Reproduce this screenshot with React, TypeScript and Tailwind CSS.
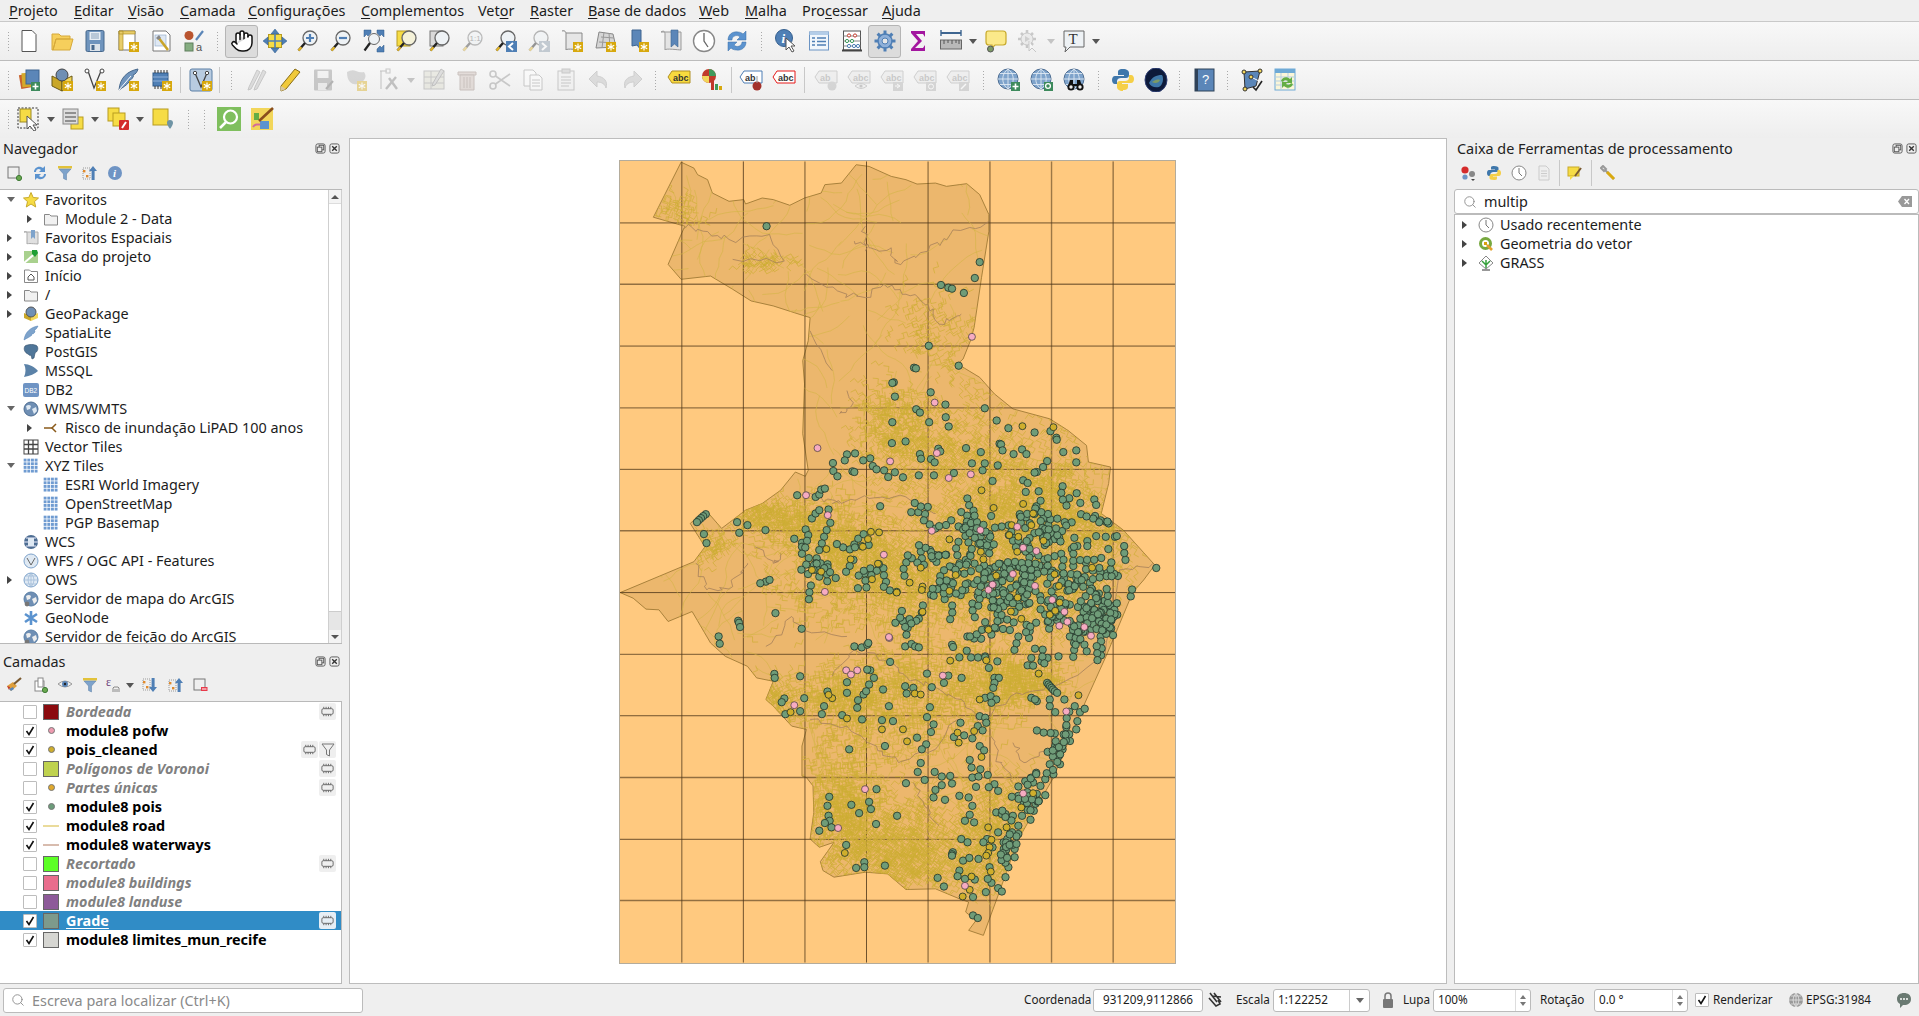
import type { ReactNode } from 'react';
import { Hand, Search } from 'lucide-react';

// ---------- map data (traced coordinates) ----------
const OUTLINE = [190,32,225,50,235,70,262,85,275,125,320,150,360,145,365,158,410,140,440,145,485,162,525,140,570,125,580,100,625,95,665,40,700,45,760,75,800,85,830,98,880,95,910,105,965,97,1000,130,1025,190,1025,240,1005,380,985,530,975,570,955,625,940,640,1000,680,1040,730,1090,775,1190,805,1240,840,1290,885,1295,935,1355,950,1350,1000,1330,1090,1390,1140,1475,1245,1445,1290,1415,1328,1345,1514,1270,1699,1200,1885,1105,2071,1045,2255,1010,2360,970,2345,990,2315,962,2290,970,2260,945,2250,880,2220,800,2222,750,2175,690,2170,605,2185,575,2165,568,2138,605,2080,565,2095,540,2070,550,1990,548,1910,530,1885,518,1880,518,1790,530,1740,490,1730,440,1670,420,1650,440,1595,395,1585,370,1550,310,1520,270,1480,220,1385,155,1415,130,1380,95,1378,60,1345,25,1328,225,1235,255,1190,215,1120,240,1095,265,1090,300,1135,365,1080,410,1060,460,1020,500,965,527,978,535,960,520,850,525,700,520,630,535,570,540,500,510,490,440,465,380,450,330,415,270,375,190,385,155,340,200,225,115,198];
const GREEN = [422,225,1000,333,987,381,895,402,915,410,925,413,957,426,862,585,943,645,822,651,827,653,767,695,763,697,770,738,867,725,907,762,1014,773,828,776,838,786,908,800,763,815,863,815,916,828,1046,810,1078,833,1149,846,1192,842,1208,862,1209,868,762,878,799,873,1054,880,1058,882,1062,900,963,893,1003,905,1092,911,1115,897,1127,911,888,895,893,903,838,911,841,925,640,912,662,909,634,930,602,938,684,930,703,924,710,947,720,957,741,960,770,966,792,981,752,980,603,962,614,978,655,963,660,965,835,975,876,975,868,926,878,936,979,939,1014,939,1008,960,930,968,1049,945,1227,905,1262,900,1262,936,1183,932,1172,950,1155,965,1149,967,1035,992,1118,990,1130,998,1225,1008,1160,1023,1125,1025,1263,1029,1243,1044,1311,1048,1316,1064,1273,1058,1275,1092,1343,1115,1350,1120,1342,1160,1367,1160,1372,1158,1316,1158,1292,1173,1292,1188,1265,1188,1250,1197,1257,1163,1349,1197,1330,1224,1479,1254,1288,1237,1254,1248,1375,1278,1262,1284,505,1035,555,1040,565,1033,570,1018,580,1015,730,1068,257,1092,250,1098,244,1104,238,1110,233,1116,342,1116,370,1125,348,1148,419,1140,252,1152,259,1179,497,1166,518,1178,518,1190,528,1138,535,1155,545,1105,555,1090,565,1080,590,1078,595,1118,585,1140,578,1160,572,1180,565,1200,558,1225,555,1240,560,1260,565,1280,
420,1295,405,1300,430,1290,345,1413,347,1419,350,1432,292,1460,295,1482,446,1390,517,1437,660,1490,680,1493,695,1485,698,1480,798,1490,815,1483,825,1490,835,1493,757,1537,925,1485,928,1492,945,1523,965,1503,1015,1520,1048,1535,1025,1555,1040,1585,1052,1585,1040,1600,1037,1615,1015,1645,1030,1640,1045,1650,1032,1660,857,1572,915,1578,903,1600,951,1585,870,1613,798,1610,820,1615,802,1632,738,1620,754,1670,865,1673,857,1703,875,1725,868,1748,830,1765,855,1785,843,1800,743,1790,735,1712,765,1715,646,1800,681,1710,627,1697,668,1675,670,1652,685,1635,692,1625,700,1605,713,1585,703,1562,695,1560,640,1598,640,1630,587,1626,578,1670,572,1694,524,1646,513,1685,513,1580,443,1573,444,1585,470,1647,463,1658,473,1694,948,1720,1000,1700,1015,1705,1018,1720,995,1730,1008,1743,980,1767,958,1758,930,1763,1000,1790,1012,1803,973,1832,978,1855,1002,1860,980,1885,997,1882,1022,1877,1040,1905,1025,1914,1050,1925,990,1913,920,1880,897,1882,878,1868,897,1908,925,1903,880,1922,875,1945,906,1952,945,1940,970,1945,980,1970,973,1997,960,2015,985,2020,950,2070,967,2080,927,2110,925,2116,925,2120,955,2135,972,2127,997,2130,945,2165,940,2182,960,2190,987,2192,1017,2230,1050,2218,1060,2228,982,2245,1032,2202,1022,2190,886,2187,903,2213,1027,2155,800,1902,832,1868,851,1892,840,1841,720,1920,700,1958,705,1980,652,1967,673,1992,776,2000,719,2025,592,1943,587,1970,590,2000,593,2015,580,2022,598,2035,565,2045,638,2088,665,2157,687,2140,687,2155,743,2150,982,2300,995,2308,
1150,1497,1140,1525,1130,1547,1145,1548,1168,1535,1184,1525,1214,1520,1183,1600,1187,1605,1191,1610,1195,1615,1199,1620,1204,1625,1210,1630,1140,1645,1155,1655,1150,1650,1190,1650,1190,1670,1205,1688,1230,1650,1258,1670,1272,1688,1285,1678,1265,1715,1262,1740,1235,1733,1204,1752,1228,1755,1245,1775,1225,1800,1205,1790,1215,1820,1190,1845,1218,1845,1200,1875,1178,1890,1165,1910,1145,1900,1105,1912,1105,1940,1178,1938,1150,1955,1130,1970,1147,1985,1090,2000,1115,2000,1138,2012,1105,2030,1088,2050,1105,2055,1065,2080,1050,2050,1045,1990,1060,1995,1070,1995,1020,2070,1035,2095,1010,2080,1095,2125,1070,2185,1078,2155,1085,2085,1075,2070,1095,2100];
const PINK = [979,558,878,756,560,893,884,908,757,933,976,972,916,983,529,1035,588,1095,1102,1130,870,1142,1002,1140,1118,1193,1154,1203,740,1214,1090,1272,1036,1304,755,1465,754,1462,638,1562,651,1575,668,1562,580,1326,497,1667,900,1578,689,1920,616,2037,1118,1933,1235,1686,960,2211,1024,1320,1035,1304,1150,1308,1197,1350,1230,1386,1238,1416,1216,1428,1284,1432,1302,1458];
const YELLOW = [1116,827,1200,830,1005,1020,1038,1073,1118,1061,1145,1090,1140,1125,1087,1125,1080,1155,1105,1160,705,1145,727,1147,697,1167,918,1168,683,1190,584,1197,650,1228,724,1241,1010,1228,1003,1205,1102,1205,1173,1172,545,1260,570,1265,840,1253,1045,1277,1305,1253,935,1275,708,1288,810,1298,845,1310,1203,1273,1215,1308,843,1320,775,1328,845,1386,918,1323,920,1533,600,1646,590,1636,487,1688,640,1707,735,1740,792,1740,803,1776,824,1632,840,1635,1000,1650,940,1750,943,1780,985,1745,1005,1823,1018,1532,1024,1440,1103,1343,1085,1385,1113,1407,1190,1395,1205,1383,1217,1358,1160,1572,1268,1637,1145,1932,1113,1975,1073,2035,1023,2035,1032,2072,1027,2095,1023,2112,1018,2120,1030,2168,978,2183,973,2223,954,2243,634,2112];
// cx, cy, n, sx, sy
const CLUSTERS = [[1150,1140,56,80,55],[950,1090,26,60,55],[1060,1260,56,90,50],[1040,1380,64,55,62],[1140,1370,56,65,55],[1290,1370,84,80,62],[1340,1420,36,45,30],[1270,1290,34,70,42],[1130,1300,28,55,38],[950,1230,16,60,32],[910,1300,14,30,25],[810,1240,16,40,48],[650,1230,22,80,38],[620,1280,14,50,20],[700,1290,10,38,24],[820,1420,14,28,38],[1000,1130,22,40,32],[1180,1150,28,40,38],[1090,2090,44,30,48],[1150,1960,28,30,32],[1240,1760,22,26,38],[1260,1470,24,48,28],[1205,1850,12,22,28]];
const RIVERS = [[190,220,250,240,320,265,430,250,470,330,330,325],[530,370,640,430,690,440,740,400,800,430,860,460,890,520,950,490],[1025,210,920,250,860,300,770,335,760,290,700,290,660,270],[690,225,690,300],[540,540,600,660],[600,1060,700,1045,800,1040,880,1090],[230,1240,260,1320,330,1310,370,1240],[420,1490,490,1400,520,1440,640,1460],[600,1580,660,1500,760,1540,800,1580,870,1610,950,1650,1000,1720],[1000,1720,1100,1630,1200,1610,1330,1530],[1090,1780,1120,1840,1190,1800],[1030,1760,1060,1840,1090,1900],[540,1710,640,1730,720,1790,780,1840,880,1800,940,1710],[820,1900,860,1980,890,2030],[1340,1520,1380,1260,1470,1240],[530,1025,620,1060],[390,1190,440,1240,460,1210],[620,790,650,770,640,720]];
const URBAN = [[870,880,70,100,80],[1000,1000,90,130,110],[1180,1130,90,100,90],[1120,1050,70,90,70],[700,1220,90,110,60],[800,1330,90,150,60],[1000,1260,90,130,70],[1180,1340,90,110,70],[640,1140,50,70,60],[470,1120,36,55,40],[420,1660,36,40,35],[620,1640,50,70,50],[780,1650,90,100,80],[950,1600,70,90,80],[1100,1600,60,60,35],[620,1950,90,55,80],[700,2080,90,80,65],[850,2150,60,80,45],[1050,2000,50,60,60],[840,2040,36,45,60],[1000,2130,50,45,60],[270,1200,16,35,25],[400,1100,30,45,25],[190,190,10,40,30],[400,345,10,40,15],[900,560,24,70,70],[780,800,36,50,60],[1300,1150,30,60,50]];

let seed = 20240;
const rnd = () => {
  seed = (seed + 0x6d2b79f5) | 0;
  let t = Math.imul(seed ^ (seed >>> 15), 1 | seed);
  t = (t + Math.imul(t ^ (t >>> 7), 61 | t)) ^ t;
  return ((t ^ (t >>> 14)) >>> 0) / 4294967296;
};
const gauss = () => (rnd() + rnd() + rnd() - 1.5) / 0.5;
const px = (x: number) => +((x / 2.703 - 9).toFixed(1));
const py = (y: number) => +((y / 3 - 10).toFixed(1));

const inside = (x: number, y: number) => {
  let hit = false;
  for (let i = 0, j = OUTLINE.length - 2; i < OUTLINE.length; j = i, i += 2) {
    const xi = OUTLINE[i], yi = OUTLINE[i + 1], xj = OUTLINE[j], yj = OUTLINE[j + 1];
    if (yi > y !== yj > y && x < ((xj - xi) * (y - yi)) / (yj - yi) + xi) hit = !hit;
  }
  return hit;
};

const pts = (a: number[]) => {
  const r: [number, number][] = [];
  for (let i = 0; i < a.length; i += 2) r.push([px(a[i]), py(a[i + 1])]);
  return r;
};
const outlinePath = 'M' + pts(OUTLINE).map((p) => p.join(',')).join('L') + 'Z';

const riverPath = RIVERS.map((r) => {
  let d = '';
  for (let i = 0; i < r.length - 2; i += 2) {
    for (let k = 0; k < 6; k++) {
      const x = r[i] + ((r[i + 2] - r[i]) * k) / 6 + (k ? gauss() * 5 : 0);
      const y = r[i + 1] + ((r[i + 3] - r[i + 1]) * k) / 6 + (k ? gauss() * 5 : 0);
      d += `${i + k === 0 ? 'M' : 'L'}${px(x)},${py(y)}`;
    }
  }
  return d + `L${px(r[r.length - 2])},${py(r[r.length - 1])}`;
}).join('');

let roadPath = '';
// long loose roads across the whole municipality
for (let i = 0; i < 420; i++) {
  let x = 130 + rnd() * 1250, y = 60 + rnd() * 2250;
  if (!inside(x, y)) continue;
  let a = rnd() * 6.28;
  roadPath += `M${px(x)},${py(y)}`;
  const steps = 5 + Math.floor(rnd() * 8);
  for (let k = 0; k < steps; k++) {
    a += (rnd() - 0.5) * 0.9;
    x += Math.cos(a) * 22;
    y += Math.sin(a) * 24;
    roadPath += `L${px(x)},${py(y)}`;
  }
}
let urbanPath = '';
// dense street blocks
URBAN.forEach(([cx, cy, n, sx, sy]) => {
  for (let i = 0; i < n * 5; i++) {
    let x = cx + gauss() * sx, y = cy + gauss() * sy;
    const a = cx * 0.01 + (rnd() > 0.5 ? 1.57 : 0) + (rnd() - 0.5) * 0.5;
    urbanPath += `M${px(x)},${py(y)}`;
    for (let k = 0; k < 3; k++) {
      const b = a + (k % 2) * 1.57;
      x += Math.cos(b) * 15;
      y += Math.sin(b) * 16;
      urbanPath += `L${px(x)},${py(y)}`;
    }
  }
});

const greenDots = pts(GREEN);
// dots follow streets, so each cluster is made of short chains
CLUSTERS.forEach(([cx, cy, n, sx, sy]) => {
  let x = cx, y = cy, a = 0;
  for (let i = 0; i < n; i++) {
    if (i % 3 === 0) {
      x = cx + gauss() * sx;
      y = cy + gauss() * sy;
      a = rnd() * 6.28;
    } else {
      a += (rnd() - 0.5) * 1.2;
      x += Math.cos(a) * 19;
      y += Math.sin(a) * 21;
    }
    if (inside(x, y)) greenDots.push([px(x), py(y)]);
  }
});
const pinkDots = pts(PINK);
const yellowDots = pts(YELLOW);

const V_LINES = [192, 359, 526, 693, 860, 1028, 1195, 1362];
const H_LINES = [215, 400, 586, 772, 957, 1142, 1328, 1514, 1699, 1885, 2071, 2255];

function MapDrawing() {
  return (
    <svg width="557" height="804" viewBox="0 0 557 804" className="block mr-[2px] mt-[1px] border border-[#b4ac9c] bg-[#ffc97f]">
      <defs>
        <clipPath id="muni"><path d={outlinePath} /></clipPath>
      </defs>
      <path d={outlinePath} fill="#ecb76d" stroke="#a07a35" strokeWidth="0.9" />
      {V_LINES.map((x, i) => (
        <line key={x} x1={px(x)} x2={px(x)} y1="0" y2="804" stroke="#4a3418" strokeWidth={i % 2 ? 1 : 1.4} strokeOpacity={i % 2 ? 0.8 : 0.55} />
      ))}
      {H_LINES.map((y, i) => (
        <line key={y} x1="0" x2="557" y1={py(y)} y2={py(y)} stroke="#4a3418" strokeWidth={i % 2 ? 1.4 : 1} strokeOpacity={i % 2 ? 0.6 : 0.8} />
      ))}
      <g clipPath="url(#muni)" fill="none" strokeLinejoin="round">
        <path d={roadPath} stroke="#d4b546" strokeWidth="0.6" />
        <path d={urbanPath} stroke="#ceae35" strokeWidth="0.7" />
        <path d={riverPath} stroke="#a6805a" strokeWidth="0.8" />
      </g>
      <g stroke="#26382c" strokeWidth="0.85">
        {greenDots.map(([x, y], i) => <circle key={i} cx={x} cy={y} r="3.7" fill="#6f9c78" />)}
        {yellowDots.map(([x, y], i) => <circle key={i} cx={x} cy={y} r="3.5" fill="#cfae2c" />)}
        {pinkDots.map(([x, y], i) => <circle key={i} cx={x} cy={y} r="3.5" fill="#f6abc2" stroke="#5a4a48" />)}
      </g>
    </svg>
  );
}

// ---------- icon pieces ----------
const Bdg = ({ x = 13, y = 13 }: { x?: number; y?: number }) => (
  <g>
    <rect x={x} y={y} width="10" height="10" fill="#d7a80d" />
    <path d={`M${x + 5} ${y + 1.5}v7M${x + 1.8} ${y + 3.2}l6.4 3.6M${x + 8.2} ${y + 3.2}l-6.4 3.6`} stroke="#fff" strokeWidth="1.2" />
  </g>
);
const Plus = ({ x = 14, y = 14 }: { x?: number; y?: number }) => (
  <g>
    <rect x={x} y={y} width="9" height="9" fill="#3d8a5c" />
    <path d={`M${x + 4.5} ${y + 1.5}v6M${x + 1.5} ${y + 4.5}h6`} stroke="#fff" strokeWidth="1.6" />
  </g>
);
const Mag = ({ lens = '#eef2f5' }: { lens?: string }) => (
  <g fill="none">
    <circle cx="14" cy="9" r="7" fill={lens} stroke="#666" strokeWidth="1.3" />
    <path d="M9 14 2.5 21.5" stroke="#222" strokeWidth="2.4" />
    <path d="M5.5 18.2 2.5 21.5" stroke="#e1b42a" strokeWidth="2.4" />
  </g>
);
const Ribbon = ({ x = 10 }: { x?: number }) => <path d={`M${x} 1h7v17l-3.5-3-3.5 3z`} fill="#5b86b8" stroke="#3e6590" strokeWidth="0.6" />;
const Globe = () => (
  <g fill="none">
    <circle cx="11" cy="11" r="10" fill="#7ea3cb" stroke="#4d6d92" />
    <path d="M1 11h20M11 1v20M3 5.5h16M3 16.5h16M11 1c-7 5-7 15 0 20M11 1c7 5 7 15 0 20" stroke="#dfe9f3" strokeWidth="0.9" />
  </g>
);
const Lab = ({ c = '#999', bg = '#e6e6e6', t = 'abc' }: { c?: string; bg?: string; t?: string }) => (
  <g>
    <path d="M5 3h18v12H5L1 9z" fill={bg} stroke={c} />
    <text x="6" y="12.5" fontSize="9" fontWeight="700" fontFamily="Liberation Sans" fill={c === '#999' ? '#888' : '#333'}>{t}</text>
  </g>
);
const Grid = ({ c = '#6f9bd1', n = 3, s = 22 }: { c?: string; n?: number; s?: number }) => {
  const out: ReactNode[] = [];
  const g = s / n;
  for (let a = 0; a < n; a++) for (let b = 0; b < n; b++) out.push(<rect key={a + '-' + b} x={1 + a * g} y={1 + b * g} width={g - 1.2} height={g - 1.2} fill={c} />);
  return <g>{out}</g>;
};

const ICONS: Record<string, ReactNode> = {
  new: <path d="M5 1.5h10l4 4v17H5z" fill="#fff" stroke="#555" />,
  open: <path d="M2 5h7l2 2h9v3H6l-3 11H2zM6 10h17l-3 11H3z" fill="#f6cf5c" stroke="#d6a93a" />,
  save: <g><rect x="3" y="1.5" width="18" height="21" rx="1.5" fill="#6f94bd" stroke="#47688c" /><rect x="6.5" y="3" width="11" height="8" fill="#e8eef4" /><path d="M8 5h8M8 7h8M8 9h8" stroke="#8aa2bb" /><rect x="7" y="15" width="10" height="7" fill="#dce3ea" /><rect x="8.5" y="16" width="3" height="5" fill="#47688c" /></g>,
  layout: <g><path d="M3 2h16v19H3z" fill="#fff" stroke="#777" /><path d="M3 2h4v19H3zM3 2h16v3H3z" fill="#e8cd6a" stroke="#b08f25" strokeWidth="0.7" /><Bdg /></g>,
  manager: <g><path d="M4 2h13l4 4v16H4z" fill="#fff" stroke="#777" /><rect x="6" y="6" width="11" height="11" fill="#dfe8f3" stroke="#8ba6c5" strokeWidth="0.6" /><path d="M9 8l10 13" stroke="#c9a429" strokeWidth="2.6" /><path d="M7 9l3-3 2 3-3 2z" fill="#888" /></g>,
  style: <g><circle cx="7" cy="6.5" r="4.5" fill="#b9542f" /><path d="M14 11l7-9" stroke="#5b86b8" strokeWidth="2.2" /><rect x="3" y="14" width="8" height="8" fill="#85ad81" stroke="#5e7e5c" /><text x="14" y="22" fontSize="11" fontFamily="Liberation Sans" fill="#555">a</text></g>,
  hand: <Hand x={0} y={0} width={24} height={24} color="#111" fill="#fff" strokeWidth={1.5} />,
  move: <g><rect x="5.5" y="5.5" width="13" height="13" fill="#f6dc45" stroke="#b79c20" /><path d="M12 0l4 5H8zM12 24l4-5H8zM0 12l5-4v8zM24 12l-5-4v8z" fill="#4f7fb5" stroke="#2f5a8a" strokeWidth="0.5" /><path d="M12 5v14M5 12h14" stroke="#4f7fb5" strokeWidth="1.6" /></g>,
  zin: <g><Mag /><path d="M10 9h8M14 5v8" stroke="#4f7fb5" strokeWidth="2.2" /></g>,
  zout: <g><Mag /><path d="M10 9h8" stroke="#4f7fb5" strokeWidth="2.2" /></g>,
  zfull: <g><path d="M2 1h7v3L6 7 4.5 5.5 2 8zM22 1h-7v3l3 3 1.5-1.5L22 8zM22 23h-7v-3l3-3 1.5 1.5L22 16z" fill="#4f7fb5" stroke="#2f5a8a" strokeWidth="0.5" /><circle cx="12" cy="10" r="5.5" fill="#eef2f5" stroke="#666" /><path d="M8 14l-5.5 7.5" stroke="#222" strokeWidth="2.2" /></g>,
  zsel: <g><rect x="2" y="2" width="13" height="15" fill="#f6dc45" stroke="#b79c20" /><Mag lens="#f4f1d8" /></g>,
  zlay: <g><rect x="2" y="2" width="13" height="15" fill="#d9d9d9" stroke="#777" /><Mag /></g>,
  z11: <g><Mag /><text x="8.5" y="12" fontSize="8" fontFamily="Liberation Sans" fill="#555">1:1</text></g>,
  zlast: <g><Mag /><rect x="12" y="12" width="11" height="11" fill="#4f7fb5" /><path d="M19 14l-4 3.5 4 3.5" fill="none" stroke="#fff" strokeWidth="2" /></g>,
  znext: <g opacity="0.45"><Mag /><rect x="12" y="12" width="11" height="11" fill="#8a9aab" /><path d="M15 14l4 3.5-4 3.5" fill="none" stroke="#fff" strokeWidth="2" /></g>,
  newmap: <g><path d="M2 2c3-1 4 1 4 3v16c0-2 14 0 16 0V4H6" fill="#e6e6e6" stroke="#888" /><Bdg /></g>,
  new3d: <g><path d="M6 3l14 2 3 13-20 1z" fill="#d5d5d5" stroke="#888" /><path d="M8 8l13 1M6 13l16 1M11 3l-2 16M16 4l1 15" stroke="#999" /><Bdg /></g>,
  newbm: <g><path d="M6 1h9v20l-4-5-5 1z" fill="#5b86b8" stroke="#3e6590" /><Bdg /></g>,
  bms: <g><path d="M2 3c3-2 4 0 4 2v16c0-2 14 0 16 0V3z" fill="#e4e4e4" stroke="#999" /><Ribbon x={12} /></g>,
  clock: <g><circle cx="12" cy="12" r="10.5" fill="#fff" stroke="#888" strokeWidth="1.4" /><path d="M12 4v8l4 6" fill="none" stroke="#666" strokeWidth="1.3" /></g>,
  refresh: <g fill="#5b93cf" stroke="#3a6ea5" strokeWidth="0.5"><path d="M3 11c0-5 4-9 10-8 2 0 4 1 5 2l3-3v9h-9l3-3c-3-3-8-1-8 3z" /><path d="M21 13c0 5-4 9-10 8-2 0-4-1-5-2l-3 3v-9h9l-3 3c3 3 8 1 8-3z" /></g>,
  info: <g><circle cx="10" cy="9" r="8.5" fill="#4f7fb5" stroke="#36608f" /><text x="7.5" y="14" fontSize="13" fontWeight="700" fontStyle="italic" fontFamily="Liberation Serif" fill="#fff">i</text><path d="M12 9v12l3-3 3 5 2-1-3-5h4z" fill="#fff" stroke="#555" /></g>,
  table: <g><rect x="2.5" y="3" width="19" height="18" fill="#f1f6fb" stroke="#6b94c4" /><rect x="2.5" y="3" width="19" height="3" fill="#b4cde8" /><path d="M5 9h3M10 9h9M5 12.5h3M10 12.5h9M5 16h3M10 16h9" stroke="#4f7fb5" strokeWidth="1.4" /></g>,
  abacus: <g><rect x="3.5" y="2" width="17" height="19" fill="#fff" stroke="#555" /><path d="M2 21.5h20" stroke="#444" strokeWidth="2" /><path d="M3.5 7h17M3.5 12h17M3.5 17h17" stroke="#888" /><g fill="#fff" stroke="#c0392b"><circle cx="9" cy="6.5" r="1.6" /><circle cx="15" cy="6.5" r="1.6" /></g><g fill="#fff" stroke="#3f9a5c"><circle cx="7" cy="12" r="1.6" /><circle cx="12" cy="12" r="1.6" /></g><g fill="#fff" stroke="#4f7fb5"><circle cx="9" cy="17" r="1.6" /><circle cx="14" cy="17" r="1.6" /><circle cx="18" cy="17" r="1.6" /></g></g>,
  gear: <g><circle cx="12" cy="12" r="7" fill="#8fb0d9" stroke="#4f7fb5" strokeWidth="1.4" /><circle cx="12" cy="12" r="3" fill="#e7e7e7" stroke="#4f7fb5" /><path d="M12 1.5v4M12 18.5v4M1.5 12h4M18.5 12h4M4.6 4.6l3 3M16.4 16.4l3 3M19.4 4.6l-3 3M7.6 16.4l-3 3" stroke="#4f7fb5" strokeWidth="3" /></g>,
  sigma: <path d="M5 2h14v6l-2-3H10l6 7-7 7h8l2-3v6H5v-2l7-8-7-8z" fill="#a3169f" />,
  ruler: <g><path d="M2 4h20" stroke="#3e6590" strokeWidth="2" /><path d="M2 1v6M22 1v6" stroke="#3e6590" strokeWidth="1.4" /><rect x="1.5" y="11" width="21" height="9" fill="#b9b9b9" stroke="#666" /><path d="M5 11v4M9 11v3M13 11v4M17 11v3M20 11v4" stroke="#555" /></g>,
  note: <g><path d="M4 2h15q3 0 3 3v8q0 3-3 3H11l-3 3V16H5q-3 0-3-3V5q0-3 2-3z" fill="#fbe98a" stroke="#c7a92a" strokeWidth="1.2" /><circle cx="6.5" cy="20" r="3" fill="#7c9a65" stroke="#555" /></g>,
  gplay: <g><circle cx="10" cy="10" r="6" fill="#ddd" stroke="#888" /><path d="M10 1v3M10 16v3M1 10h3M16 10h3M4 4l2 2M14 14l2 2M16 4l-2 2M6 14l-2 2" stroke="#888" strokeWidth="2.5" /><path d="M8 7l5 3-5 3z" fill="#999" /><path d="M12 12v10l3-3 4 4" fill="#fff" stroke="#888" /></g>,
  tbox: <g><path d="M2 2h20v16H8l-5 5 1-5H2z" fill="#eef2f5" stroke="#666" /><text x="6.5" y="15" fontSize="15" fontFamily="Liberation Serif" fill="#333">T</text></g>,
  dsm: <g><rect x="3" y="6" width="13" height="14" fill="#c9632e" transform="rotate(-10 9 13)" /><rect x="5" y="5" width="13" height="14" fill="#d4aa2c" transform="rotate(-4 9 13)" /><rect x="9" y="2" width="13" height="14" fill="#5b86b8" stroke="#3e6590" /><Plus /></g>,
  gpkg: <g><path d="M2 8l10 5v10L2 18z" fill="#c9a728" stroke="#6b5a16" /><path d="M12 13l10-5v10l-10 5z" fill="#f2d65a" stroke="#6b5a16" /><circle cx="12" cy="7" r="6" fill="#6f8fb4" stroke="#444" /><Bdg /></g>,
  vnew: <g><path d="M5 3l6 17 7-17" fill="none" stroke="#444" strokeWidth="1.3" /><circle cx="4" cy="3" r="2" fill="#fff" stroke="#444" /><circle cx="19" cy="3" r="2" fill="#fff" stroke="#444" /><Bdg /></g>,
  feather: <g><path d="M22 1C12 3 4 9 3 22c4-3 7-4 10-8 1-1 0-2 0-2 2 0 3-1 4-3 1-1 0-2 0-2 3-1 4-3 5-6z" fill="#6f94bd" stroke="#47688c" /><path d="M3 22 15 8" stroke="#fff" /><Bdg /></g>,
  chip: <g><rect x="4" y="5" width="15" height="13" fill="#4f7fb5" stroke="#2f5a8a" /><path d="M6 5V2M9 5V2M12 5V2M15 5V2M18 5V2M6 21v-3M9 21v-3M12 21v-3M15 21v-3" stroke="#333" /><path d="M4 9h15M4 13h15" stroke="#8fb0d9" /><Bdg /></g>,
  vbox: <g><rect x="1" y="1" width="22" height="22" rx="2" fill="#b8cbe0" stroke="#5b7ea5" /><path d="M6 5l6 14 6-14" fill="none" stroke="#444" strokeWidth="1.3" /><circle cx="6" cy="5" r="1.7" fill="#fff" stroke="#444" /><circle cx="18" cy="5" r="1.7" fill="#fff" stroke="#444" /><Bdg /></g>,
  pencils: <g fill="#bbb" stroke="#888"><path d="M12 2l3 2-9 17-3 1 1-3z" /><path d="M18 2l3 2-9 17-3 1 1-3z" /></g>,
  pencil: <g><path d="M17 1l5 3L8 21l-5 2 0-5z" fill="#f0c93a" stroke="#8a6d15" /><path d="M3 18v5l5-2z" fill="#d8c7a0" /></g>,
  saveed: <g><rect x="3" y="1.5" width="18" height="21" rx="1" fill="#888" /><rect x="6.5" y="3" width="11" height="7" fill="#eee" /><rect x="7" y="15" width="9" height="7" fill="#ddd" /><path d="M15 21l7-8" stroke="#555" strokeWidth="2" /></g>,
  polyadd: <g><path d="M3 4q5-3 9-1t8 1q3 4 0 8t-7 4q-4 1-7-2T3 4z" fill="#aaa" /><Bdg /></g>,
  vtool: <g><path d="M3 3h7M4 3v18M3 21" stroke="#777" fill="none" /><rect x="9" y="1" width="4" height="4" fill="none" stroke="#888" /><path d="M9 21l10-12M12 10l8 11" stroke="#777" strokeWidth="2.4" /></g>,
  attr: <g><rect x="2" y="3" width="20" height="18" fill="#d9d9c9" stroke="#888" /><path d="M2 9h20M2 15h20M9 3v18" stroke="#888" /><path d="M19 1l3 2-9 14-3 1 1-3z" fill="#bbb" stroke="#777" /></g>,
  trash: <g fill="#c9b8b0" stroke="#8d7a72"><path d="M3 4h18v3H3z" /><path d="M5 7h14v15H5z" /><path d="M9 9v11M12 9v11M15 9v11" /></g>,
  cut: <g fill="none" stroke="#888" strokeWidth="1.6"><circle cx="5" cy="6" r="3" /><circle cx="5" cy="18" r="3" /><path d="M7.5 8 22 18M7.5 16 22 6" /></g>,
  copy: <g fill="#fff" stroke="#888"><path d="M3 2h9l3 3v13H3z" /><path d="M9 7h9l3 3v12H9z" /><path d="M11 12h8M11 15h8M11 18h8" /></g>,
  paste: <g fill="#eee" stroke="#888"><rect x="4" y="3" width="16" height="19" /><rect x="8" y="1" width="8" height="4" fill="#bbb" /><path d="M7 9h10M7 12h10M7 15h10M7 18h8" /></g>,
  undo: <path d="M10 3 2 11l8 8v-5c5 0 8 2 9 6 2-7-2-11-9-12z" fill="#b9b9b9" stroke="#999" />,
  redo: <path d="M14 3l8 8-8 8v-5c-5 0-8 2-9 6-2-7 2-11 9-12z" fill="#b9b9b9" stroke="#999" />,
  labY: <g><Lab c="#b08f25" bg="#f8da3e" /></g>,
  pie: <g><circle cx="9" cy="8" r="7" fill="#c0392b" /><path d="M9 8V1a7 7 0 0 1 7 7z" fill="#3f9a5c" /><path d="M9 8H2a7 7 0 0 0 7 7z" fill="#f2d65a" /><rect x="11" y="13" width="3" height="9" fill="#c0392b" /><rect x="15" y="16" width="3" height="6" fill="#3f9a5c" /><rect x="19" y="18" width="3" height="4" fill="#d7a80d" /></g>,
  labPin: <g><Lab c="#4f7fb5" bg="#fff" t="ab" /><circle cx="18" cy="18" r="4.5" fill="#a3312b" /><path d="M18 8v7" stroke="#999" /></g>,
  labRed: <Lab c="#e51919" bg="#fff" />,
  d1: <g><Lab t="ab" /><circle cx="18" cy="18" r="4.5" fill="#aaa" /></g>,
  d2: <g><Lab /><path d="M8 18q6-5 12 0-6 5-12 0z" fill="#eee" stroke="#999" /><circle cx="14" cy="18" r="1.6" fill="#888" /></g>,
  d3: <g><Lab /><rect x="13" y="14" width="10" height="9" fill="#aaa" /><path d="M15 18h4M17 16l3 2-3 2" stroke="#fff" fill="none" /></g>,
  d4: <g><Lab /><rect x="13" y="14" width="10" height="9" fill="#aaa" /><circle cx="18" cy="18.5" r="2.5" fill="none" stroke="#fff" /></g>,
  d5: <g><Lab /><rect x="13" y="14" width="10" height="9" fill="#aaa" /><path d="M15 21l5-5" stroke="#fff" strokeWidth="1.5" /></g>,
  gPlus: <g><Globe /><Plus /></g>,
  gMag: <g><Globe /><rect x="14" y="14" width="9" height="9" fill="#3d8a5c" /><circle cx="18" cy="18" r="2.4" fill="none" stroke="#fff" strokeWidth="1.3" /></g>,
  gBin: <g><Globe /><circle cx="8" cy="19" r="3.6" fill="#111" /><circle cx="17" cy="19" r="3.6" fill="#111" /><path d="M5 18l2-6h3v4h4v-4h3l2 6" fill="#111" /><circle cx="8" cy="19" r="1.7" fill="#eee" /><circle cx="17" cy="19" r="1.7" fill="#eee" /></g>,
  python: <g><path d="M12 1c-5 0-5 2-5 4v2h6v1H4c-2 0-3 2-3 4s1 4 3 4h2v-3c0-2 2-3 4-3h5c2 0 3-1 3-3V5c0-2-2-4-6-4z" fill="#3f77ab" /><path d="M12 22c5 0 5-2 5-4v-2h-6v-1h9c2 0 3-2 3-4s-1-4-3-4h-2v3c0 2-2 3-4 3H9c-2 0-3 1-3 3v3c0 2 2 4 6 4z" fill="#f5cf47" /></g>,
  earth: <g><ellipse cx="12" cy="12" rx="11" ry="12" fill="#0d1a3a" stroke="#2f3f74" /><path d="M5 15c3-6 7-8 13-8 2 3 1 10-3 12-4 1-8 0-10-4z" fill="#3f78a8" /><path d="M8 14c3-2 5-3 8-2-1 3-5 4-8 2z" fill="#7c9a65" /></g>,
  help: <g><rect x="3" y="1" width="19" height="22" fill="#5b86b8" stroke="#2f4258" /><rect x="3" y="1" width="3" height="22" fill="#2f4258" /><text x="10" y="16" fontSize="13" fontFamily="Liberation Sans" fill="#fff">?</text></g>,
  topo: <g><path d="M4 4l16-1-4 15-11 3z" fill="#5b86b8" stroke="#333" /><path d="M11 9l8 4" stroke="#fff" /><circle cx="4" cy="4" r="2" fill="#f2d65a" stroke="#333" /><circle cx="20" cy="3" r="2" fill="#f2d65a" stroke="#333" /><circle cx="11" cy="9" r="2" fill="#f2d65a" stroke="#333" /><circle cx="5" cy="21" r="2" fill="#f2d65a" stroke="#333" /><path d="M13 19l3 3 6-9" fill="none" stroke="#222" strokeWidth="1.6" /></g>,
  tbl2: <g><rect x="2" y="1" width="20" height="21" fill="#fbf6d8" stroke="#6faad6" /><rect x="2" y="1" width="20" height="4" fill="#6faad6" /><path d="M2 9h20M2 13h20M2 17h20M8 5v17M15 5v17" stroke="#b5cfe3" /><path d="M8 13c1-4 6-5 9-2l2-2v6h-6l2-2c-2-1-4-1-5 1zM20 16c-1 4-6 5-9 2l-2 2v-6h6l-2 2c2 1 4 1 5-1z" fill="#63ad45" /></g>,
  sel: <g><rect x="1" y="1" width="20" height="20" fill="none" stroke="#333" strokeDasharray="2 1.5" /><rect x="3" y="2" width="11" height="13" fill="#f6dc45" stroke="#9c8a22" /><path d="M10 9v13l3-3 4 5 2-1-3-5h4z" fill="#fff" stroke="#555" /></g>,
  selAttr: <g><rect x="10" y="10" width="12" height="12" fill="#f6dc45" stroke="#b79c20" /><rect x="2" y="2" width="15" height="15" fill="#ddd" stroke="#888" /><path d="M4 6h11M4 10h11M4 14h11" stroke="#777" strokeWidth="1.4" /></g>,
  desel: <g><rect x="2" y="1" width="11" height="13" fill="#f6dc45" stroke="#b79c20" /><rect x="7" y="6" width="12" height="13" fill="#f6dc45" stroke="#b79c20" /><rect x="13" y="13" width="10" height="10" rx="1" fill="#d32b2b" /><path d="M16 21l4-6" stroke="#fff" strokeWidth="2" /></g>,
  selLoc: <g><rect x="2" y="2" width="15" height="16" fill="#f6dc45" stroke="#b79c20" /><path d="M19 13a3 3 0 0 1 3 3c0 2-3 6-3 6s-3-4-3-6a3 3 0 0 1 3-3z" fill="#6f94a5" /></g>,
  locator: <g><rect x="0" y="0" width="24" height="24" fill="#7fbf5e" /><circle cx="13.5" cy="10" r="6.5" fill="none" stroke="#fff" strokeWidth="2.2" /><path d="M9 15l-6 6" stroke="#fff" strokeWidth="2.5" /></g>,
  mapstyle: <g><rect x="1" y="1" width="22" height="22" fill="#f2d65a" /><rect x="4" y="6" width="5" height="7" fill="#63ad45" /><rect x="10" y="14" width="9" height="8" fill="#5b93cf" /><path d="M3 20c3-5 5-1 7-3" stroke="#d36a9a" strokeWidth="2" fill="none" /><path d="M23 1 9 14" stroke="#8a4f1d" strokeWidth="2.6" /></g>,
};

function Ico({ name, dim }: { name: string; dim?: boolean }) {
  return (
    <svg width="24" height="24" viewBox="0 0 24 24" className={dim ? 'opacity-40' : ''}>
      {ICONS[name]}
    </svg>
  );
}

function Btns({ names }: { names: string }) {
  return (
    <>
      {names.split(' ').map((n, i) => {
        const dim = n.startsWith('-');
        const on = n.startsWith('*');
        const name = dim || on ? n.slice(1) : n;
        return (
          <div key={name + i} className={`w-[33px] h-[33px] shrink-0 flex items-center justify-center rounded-[3px] ${on ? 'bg-[#dcdcdc] border border-[#b5b5b5]' : ''}`}>
            <Ico name={name} dim={dim} />
          </div>
        );
      })}
    </>
  );
}

const Arrow = ({ dim, cls = 'w-[12px]' }: { dim?: boolean; cls?: string }) => (
  <div className={`${cls} shrink-0 flex justify-center`}>
    <div className={`w-0 h-0 border-x-[4px] border-x-transparent border-t-[5px] ${dim ? 'border-t-[#c4c4c4]' : 'border-t-[#555]'}`} />
  </div>
);
const Grip = ({ cls }: { cls: string }) => (
  <div className={`${cls} shrink-0 flex justify-center`}>
    <div className="w-[3px] h-[21px] bg-[radial-gradient(#aaa_0.7px,transparent_0.8px)] bg-[length:3px_3px]" />
  </div>
);
const Sep = ({ cls }: { cls: string }) => (
  <div className={`${cls} shrink-0 flex justify-center`}><div className="w-px h-[26px] bg-[#c8c8c8]" /></div>
);

function Row({ cls, children }: { cls: string; children: ReactNode }) {
  return <div className={`${cls} flex items-center pl-[4px] bg-gradient-to-b from-[#f8f8f8] to-[#eeeeee] border-b border-[#bcbcbc]`}>{children}</div>;
}

// ---------- small panel icons (16px) ----------
const Sm: Record<string, ReactNode> = {
  addfav: <g><rect x="2" y="2" width="11" height="11" fill="none" stroke="#777" /><circle cx="13" cy="13" r="2.6" fill="#6aa84f" stroke="#3d7a34" /></g>,
  refresh: <g fill="#5b93cf"><path d="M2 7c0-3 3-6 7-5l2 1 2-2v6H7l2-2C7 3 4 4 4 7zM14 9c0 3-3 6-7 5l-2-1-2 2V9h6l-2 2c2 2 5 1 5-2z" /></g>,
  filter: <g><path d="M1 1h14v2.5H1z" fill="#e2c23a" /><path d="M2 4h12L9.5 9v6l-3-1.5V9z" fill="#7ea3cb" stroke="#5a7fa6" strokeWidth="0.5" /></g>,
  collapse: <g><rect x="1" y="3" width="7" height="11" fill="none" stroke="#999" strokeDasharray="1 1" /><rect x="1" y="5" width="2.4" height="2.4" fill="#e08a2c" /><rect x="4" y="10" width="2.4" height="2.4" fill="#e08a2c" /><path d="M11 1l4 5h-2.4v9h-3V6H7z" fill="#4f7fb5" /></g>,
  expand: <g><rect x="1" y="2" width="7" height="11" fill="none" stroke="#999" strokeDasharray="1 1" /><rect x="1" y="4" width="2.4" height="2.4" fill="#e08a2c" /><rect x="4" y="9" width="2.4" height="2.4" fill="#e08a2c" /><path d="M11 15l4-5h-2.4V1h-3v9H7z" fill="#4f7fb5" /></g>,
  info: <g><circle cx="8" cy="8" r="7" fill="#6f94c4" /><text x="6" y="12" fontSize="11" fontWeight="700" fontStyle="italic" fontFamily="Liberation Serif" fill="#fff">i</text></g>,
  brush: <g><path d="M1 9l6-4 4 4-6 5z" fill="#e0a03c" /><path d="M1 9l3 1-1 3z" fill="#c0392b" /><path d="M3 12l4-2 1 2-3 2z" fill="#5b86b8" /><path d="M8 7l7-6" stroke="#7a5a30" strokeWidth="2.2" /></g>,
  addgrp: <g fill="#fff" stroke="#888"><rect x="3" y="4" width="9" height="10" /><rect x="6" y="1" width="5" height="9" /><circle cx="13" cy="13" r="2.6" fill="#6aa84f" stroke="#3d7a34" /></g>,
  eye: <g><path d="M1 7q7-6 14 0-7 6-14 0z" fill="#eee" stroke="#999" /><circle cx="8" cy="7" r="3" fill="#5b86b8" /><circle cx="8" cy="7" r="1.2" fill="#222" /></g>,
  eps: <g><text x="1" y="9" fontSize="12" fontFamily="Liberation Serif" fill="#6b3f7a">ε</text><path d="M8 15v-4l1-1h4l1 1v4M10 15v-3M12 15v-3" stroke="#888" fill="none" /></g>,
  remove: <g><rect x="2" y="2" width="11" height="11" fill="none" stroke="#777" /><rect x="9" y="10" width="6.5" height="4" fill="#e8394a" /><path d="M10 12h4.5" stroke="#fff" /></g>,
  star: <path d="M8 .5l2.2 5 5.3.5-4 3.6 1.2 5.4L8 12l-4.7 3 1.2-5.4-4-3.6 5.3-.5z" fill="#f6dc45" stroke="#c7a92a" />,
  folder: <path d="M1.5 3.5h5l1.5 1.5h6.5v9h-13z" fill="#f1f1f1" stroke="#888" />,
  bm: <g><path d="M1 2c2-1 3 0 3 1v11c0-1 9 0 11 0V2z" fill="#e0e0e0" stroke="#aaa" /><path d="M8 0h4v9l-2-2-2 2z" fill="#7ea3cb" /></g>,
  home: <g><rect x="1" y="2" width="14" height="12" fill="#a9d18e" /><path d="M1 14 15 2" stroke="#fff" strokeWidth="2" /><path d="M9 1h5l1 3-3 4-3-3z" fill="#1e9e33" /></g>,
  inicio: <g><path d="M1.5 2h5l1.5 1.5h6.5v11h-13z" fill="#fff" stroke="#888" /><path d="M5 9l3-3 3 3v3H5z" fill="none" stroke="#555" /></g>,
  gpkg: <g><path d="M1 7l7 3v5l-7-3z" fill="#c9a728" /><path d="M15 7l-7 3v5l7-3z" fill="#f2d65a" /><circle cx="8" cy="6" r="5" fill="#6f8fb4" stroke="#555" /></g>,
  feather: <path d="M15 1C8 2 2 7 1 15c3-2 6-3 8-5 0 0-1-1 0-1 2 0 3-2 3-3l-1-1c2 0 3-2 4-4z" fill="#7ea3cb" stroke="#4f7fb5" strokeWidth="0.5" />,
  pg: <path d="M2 2c3-2 10-2 12 0 2 3 0 6-2 7l-1 5-2 1-1-4c-1 1-2 0-3-1C2 9 0 5 2 2z" fill="#4f7699" stroke="#2f4c68" strokeWidth="0.6" />,
  mssql: <path d="M1 1c5 0 11 3 14 7-3 3-8 5-14 6 2-4 2-9 0-13z" fill="#5b82a8" />,
  db2: <g><rect x="0" y="1" width="16" height="14" rx="2" fill="#6f94c4" /><text x="1.5" y="10.5" fontSize="6.5" fontFamily="Liberation Sans" fill="#fff">DB2</text></g>,
  wms: <g><circle cx="8" cy="8" r="7" fill="#6f8fb4" stroke="#4d6d92" /><path d="M3 5q3-2 5 0l-1 3-3 1zM9 8l4-2 1 4-3 3z" fill="#dfe9f3" /></g>,
  risco: <g fill="none" stroke="#8a5a1a" strokeWidth="1.5"><path d="M1 8h8" /><path d="M13 4 9 8l4 4" /></g>,
  vtiles: <g><rect x="1" y="1" width="14" height="14" fill="none" stroke="#444" /><path d="M1 5.5h14M1 10h14M5.5 1v14M10 1v14" stroke="#444" strokeWidth="1.3" /></g>,
  xyz: <g><svg width="16" height="16" viewBox="0 0 24 24"><Grid n={4} /></svg></g>,
  wcs: <g><circle cx="8" cy="8" r="7" fill="#4d6d92" /><path d="M1 8h14M3 4h10M3 12h10" stroke="#eef" /><path d="M5 4v8h6V4" fill="#dfe9f3" /></g>,
  wfs: <g><circle cx="8" cy="8" r="7" fill="#dfe9f3" stroke="#7ea3cb" /><path d="M4 5l4 7 4-7" fill="none" stroke="#666" /></g>,
  ows: <g><circle cx="8" cy="8" r="7" fill="#dfe9f3" stroke="#7ea3cb" /><path d="M1 8h14M8 1v14M3 4h10M3 12h10M8 1q-6 7 0 14M8 1q6 7 0 14" stroke="#9bb8d6" fill="none" strokeWidth="0.7" /></g>,
  arc: <g><circle cx="8" cy="8" r="7" fill="#6f8fb4" stroke="#5a7fa6" /><path d="M3 5q3-2 5 0l-1 3-3 1zM9 8l4-2 1 4-3 3z" fill="#eee" /><circle cx="4" cy="13" r="2.4" fill="#777" /></g>,
  geonode: <path d="M8 1v14M2 4l12 8M14 4 2 12" stroke="#5b93cf" strokeWidth="2.6" />,
  clock: <g><circle cx="8" cy="8" r="7" fill="#fff" stroke="#888" /><path d="M8 3v5l3 3" fill="none" stroke="#777" /></g>,
  qgis: <g><circle cx="7.5" cy="7.5" r="5" fill="none" stroke="#77a83f" strokeWidth="3" /><path d="M9 9l5 5" stroke="#e2a02c" strokeWidth="2.6" /><rect x="6" y="6" width="3" height="3" fill="#d9a10c" /></g>,
  grass: <g><path d="M8 1l7 7-7 6-7-6z" fill="#fff" stroke="#888" /><path d="M8 13V5M8 10 4 6M8 10l4-4" stroke="#36a03c" strokeWidth="1.5" /><path d="M4 15h8" stroke="#333" /></g>,
  models: <g><circle cx="5" cy="5" r="3.6" fill="#d52b2b" /><circle cx="5" cy="12" r="2.6" fill="#6f94c4" /><circle cx="12" cy="9" r="3" fill="#888" /><path d="M11 14l2 2 2-2z" fill="#444" /></g>,
  py: <g><path d="M8 1C5 1 5 2 5 3v1.5h4V5H3C1.5 5 1 6.5 1 8s.5 3 2 3h1.5V9c0-1 1-2 3-2h3c1 0 2-1 2-2V3c0-1-1-2-4.5-2z" fill="#3f77ab" /><path d="M8 15c3 0 3-1 3-2v-1.5H7V11h6c1.5 0 2-1.5 2-3s-.5-3-2-3h-1.5v2c0 1-1 2-3 2h-3c-1 0-2 1-2 2v2c0 1 1 2 4.5 2z" fill="#f5cf47" /></g>,
  doc: <g fill="#eee" stroke="#aaa"><path d="M3 1h7l3 3v11H3z" /><path d="M5 6h6M5 8.5h6M5 11h6" /></g>,
  noteEd: <g><rect x="1" y="2" width="11" height="9" fill="#f6dc45" stroke="#c7a92a" /><path d="M3 11v4l4-4z" fill="#f6dc45" /><path d="M14 3 8 11" stroke="#7a5a30" strokeWidth="2" /></g>,
  wrench: <g><path d="M3 1 1 3l3 3 2-2zM5 5l9 9" stroke="#999" strokeWidth="2" fill="none" /><path d="M7 7l7 7" stroke="#d9a90f" strokeWidth="3" /></g>,
  chip: <g><rect x="2" y="5" width="12" height="6" rx="1.5" fill="none" stroke="#666" /><path d="M4 3v2M6.5 3v2M9 3v2M11.5 3v2M4 11v2M6.5 11v2M9 11v2M11.5 11v2" stroke="#666" /></g>,
  dock: <g fill="none" stroke="#555"><rect x="1" y="1" width="10" height="10" rx="2" /><rect x="4.5" y="2.5" width="5" height="5" /><rect x="2.5" y="4.5" width="5" height="5" fill="#eee" /></g>,
  close: <g><rect x="1" y="1" width="10" height="10" rx="2" fill="none" stroke="#555" /><path d="M3.5 3.5l5 5M8.5 3.5l-5 5" stroke="#333" strokeWidth="1.5" /></g>,
  mapmouse: <g fill="none" stroke="#333" strokeWidth="1.6"><path d="M3 1l7 9M7 1l7 9M5 4l9 1M2 6l7 8 4-2-2-4" /></g>,
  lock: <g fill="#777"><rect x="3" y="7" width="10" height="9" rx="1" /><path d="M5 7V4a3 3 0 0 1 6 0v3" fill="none" stroke="#777" strokeWidth="1.5" /></g>,
  globe: <g><circle cx="8" cy="8" r="7" fill="#999" /><path d="M1 8h14M8 1v14M3 4h10M3 12h10M8 1q-6 7 0 14M8 1q6 7 0 14" stroke="#eee" fill="none" strokeWidth="0.7" /></g>,
  msg: <g><path d="M8 1c4 0 7 2 7 6s-3 6-7 6l-1 0-3 3 0-4C2 11 1 9 1 7c0-4 3-6 7-6z" fill="#6a7a72" /><circle cx="5" cy="7" r="1" fill="#fff" /><circle cx="8" cy="7" r="1" fill="#fff" /><circle cx="11" cy="7" r="1" fill="#fff" /></g>,
};

function S({ n, size = 16, dim }: { n: string; size?: number; dim?: boolean }) {
  return (
    <svg width={size} height={size} viewBox={n === 'dock' || n === 'close' ? '0 0 12 12' : '0 0 16 16'} className={`shrink-0 ${dim ? 'opacity-50' : ''}`}>
      {Sm[n]}
    </svg>
  );
}

const Caret = ({ open }: { open?: boolean }) =>
  open ? (
    <div className="w-0 h-0 border-x-[4px] border-x-transparent border-t-[5px] border-t-[#666]" />
  ) : (
    <div className="w-0 h-0 border-y-[4px] border-y-transparent border-l-[5px] border-l-[#444]" />
  );

// level, caret (0 none, 1 closed, 2 open), icon, label
const NAV: [number, number, string, string][] = [
  [0, 2, 'star', 'Favoritos'],
  [1, 1, 'folder', 'Module 2 - Data'],
  [0, 1, 'bm', 'Favoritos Espaciais'],
  [0, 1, 'home', 'Casa do projeto'],
  [0, 1, 'inicio', 'Início'],
  [0, 1, 'folder', '/'],
  [0, 1, 'gpkg', 'GeoPackage'],
  [0, 0, 'feather', 'SpatiaLite'],
  [0, 0, 'pg', 'PostGIS'],
  [0, 0, 'mssql', 'MSSQL'],
  [0, 0, 'db2', 'DB2'],
  [0, 2, 'wms', 'WMS/WMTS'],
  [1, 1, 'risco', 'Risco de inundação LiPAD 100 anos'],
  [0, 0, 'vtiles', 'Vector Tiles'],
  [0, 2, 'xyz', 'XYZ Tiles'],
  [1, 0, 'xyz', 'ESRI World Imagery'],
  [1, 0, 'xyz', 'OpenStreetMap'],
  [1, 0, 'xyz', 'PGP Basemap'],
  [0, 0, 'wcs', 'WCS'],
  [0, 0, 'wfs', 'WFS / OGC API - Features'],
  [0, 1, 'ows', 'OWS'],
  [0, 0, 'arc', 'Servidor de mapa do ArcGIS'],
  [0, 0, 'geonode', 'GeoNode'],
  [0, 0, 'arc', 'Servidor de feição do ArcGIS'],
];

type Layer = { label: string; on: boolean; sym: string; chip?: boolean; filter?: boolean; sel?: boolean };
const LAYERS: Layer[] = [
  { label: 'Bordeada', on: false, sym: 'bg-[#8b0a0e]', chip: true },
  { label: 'module8 pofw', on: true, sym: 'dot bg-[#ee9bb0]' },
  { label: 'pois_cleaned', on: true, sym: 'dot bg-[#cfae2c]', chip: true, filter: true },
  { label: 'Polígonos de Voronoi', on: false, sym: 'bg-[#bfd24f]', chip: true },
  { label: 'Partes únicas', on: false, sym: 'dot bg-[#e0a92d]', chip: true },
  { label: 'module8 pois', on: true, sym: 'dot bg-[#6c9c7a]' },
  { label: 'module8 road', on: true, sym: 'line bg-[#eadb9b]' },
  { label: 'module8 waterways', on: true, sym: 'line bg-[#d8bcae]' },
  { label: 'Recortado', on: false, sym: 'bg-[#5cff25]', chip: true },
  { label: 'module8 buildings', on: false, sym: 'bg-[#e96d8d]' },
  { label: 'module8 landuse', on: false, sym: 'bg-[#8d5a99]' },
  { label: 'Grade', on: true, sym: 'bg-[#7d9a8c]', chip: true, sel: true },
  { label: 'module8 limites_mun_recife', on: true, sym: 'bg-[#d6d6d2]' },
];

function Symbol({ sym }: { sym: string }) {
  if (sym.startsWith('dot ')) {
    return <div className="w-4 flex justify-center"><div className={`w-[7px] h-[7px] rounded-full border border-[#777] ${sym.slice(4)}`} /></div>;
  }
  if (sym.startsWith('line ')) {
    return <div className={`w-4 h-[2px] ${sym.slice(5)}`} />;
  }
  return <div className={`w-4 h-4 border border-[#666] ${sym}`} />;
}

function Check({ on }: { on: boolean }) {
  return (
    <div className="w-[14px] h-[14px] bg-white border border-[#bdbdbd] rounded-[1px] flex items-center justify-center">
      {on && <svg width="10" height="10" viewBox="0 0 10 10"><path d="M1.5 5l2.5 3.5L8.5 1" fill="none" stroke="#111" strokeWidth="1.6" /></svg>}
    </div>
  );
}

function PanelTitle({ text }: { text: string }) {
  return (
    <div className="h-[21px] flex items-center justify-between pl-[3px] pr-[1px] text-[#222] shrink-0">
      <span className="pt-[2px]">{text}</span>
      <span className="flex gap-[3px] pr-[1px]"><S n="dock" size={11} /><S n="close" size={11} /></span>
    </div>
  );
}

const Tool = ({ n, cls, dim }: { n: string; cls: string; dim?: boolean }) => (
  <div className={`${cls} shrink-0 flex justify-center`}><S n={n} dim={dim} /></div>
);

const MENU: [string, string, string, string][] = [
  ['w-[65px]', '', 'P', 'rojeto'],
  ['w-[54px]', '', 'E', 'ditar'],
  ['w-[52px]', '', 'V', 'isão'],
  ['w-[68px]', '', 'C', 'amada'],
  ['w-[113px]', '', 'C', 'onfigurações'],
  ['w-[117px]', '', 'C', 'omplementos'],
  ['w-[52px]', 'Vet', 'o', 'r'],
  ['w-[58px]', '', 'R', 'aster'],
  ['w-[111px]', '', 'B', 'ase de dados'],
  ['w-[46px]', '', 'W', 'eb'],
  ['w-[57px]', '', 'M', 'alha'],
  ['w-[80px]', 'Pro', 'c', 'essar'],
  ['w-[60px]', '', 'A', 'juda'],
];

const Spin = ({ cls, value }: { cls: string; value: string }) => (
  <div className={`${cls} h-[23px] shrink-0 bg-white border border-[#bbb] rounded-[3px] flex items-center pl-[4px] text-[#222]`}>
    <span className="flex-1">{value}</span>
    <div className="w-[15px] h-full border-l border-[#ddd] flex flex-col items-center justify-center gap-[3px]">
      <div className="w-0 h-0 border-x-[3.5px] border-x-transparent border-b-[4px] border-b-[#777]" />
      <div className="w-0 h-0 border-x-[3.5px] border-x-transparent border-t-[4px] border-t-[#777]" />
    </div>
  </div>
);

export default function App() {
  return (
    <div className="w-[1919px] h-[1016px] overflow-hidden flex flex-col bg-[#efefef] font-['Noto_Sans','Open_Sans',sans-serif] text-[14.4px] text-[#1c1c1c] leading-none">
      {/* Menu */}
      <div className="h-[22px] shrink-0 flex items-center pl-[9px] bg-[#efefef] border-b border-[#c9c9c9]">
        {MENU.map(([w, a, u, b]) => (
          <div key={a + u + b} className={`${w} shrink-0 whitespace-nowrap pt-[2px]`}>
            {a}<span className="underline underline-offset-2">{u}</span>{b}
          </div>
        ))}
      </div>

      {/* Toolbars */}
      <Row cls="h-[39px] shrink-0">
        <Grip cls="w-[8px]" />
        <Btns names="new open save layout manager style" />
        <Grip cls="w-[15px]" />
        <Btns names="*hand move zin zout zfull zsel zlay -z11 zlast znext newmap new3d newbm bms clock refresh" />
        <Grip cls="w-[16px]" />
        <Btns names="info table abacus *gear sigma ruler" />
        <Arrow />
        <Btns names="note -gplay" />
        <Arrow dim />
        <Btns names="tbox" />
        <Arrow />
      </Row>
      <Row cls="h-[39px] shrink-0">
        <Grip cls="w-[8px]" />
        <Btns names="dsm gpkg vnew feather chip" />
        <Sep cls="w-[7px]" />
        <Btns names="vbox" />
        <Sep cls="w-[5px]" />
        <Grip cls="w-[18px]" />
        <Btns names="-pencils pencil -saveed -polyadd -vtool" />
        <Arrow dim />
        <Btns names="-attr -trash -cut -copy -paste -undo -redo" />
        <Grip cls="w-[14px]" />
        <Btns names="labY pie" />
        <Sep cls="w-[6px]" />
        <Btns names="labPin labRed" />
        <Sep cls="w-[9px]" />
        <Btns names="-d1 -d2 -d3 -d4 -d5" />
        <Grip cls="w-[18px]" />
        <Btns names="gPlus gMag gBin" />
        <Grip cls="w-[15px]" />
        <Btns names="python earth" />
        <Grip cls="w-[15px]" />
        <Btns names="help" />
        <Grip cls="w-[15px]" />
        <Btns names="topo tbl2" />
      </Row>
      <Row cls="h-[38px] shrink-0 !border-b-0">
        <Grip cls="w-[8px]" />
        <Btns names="sel" />
        <Arrow cls="w-[11px]" />
        <Btns names="selAttr" />
        <Arrow />
        <Btns names="desel" />
        <Arrow />
        <Btns names="selLoc" />
        <Grip cls="w-[18px]" />
        <Grip cls="w-[15px]" />
        <Btns names="locator mapstyle" />
      </Row>

      {/* Work area */}
      <div className="flex-1 min-h-0 flex">
        {/* Left docks */}
        <div className="w-[342px] shrink-0 flex flex-col">
          <PanelTitle text="Navegador" />
          <div className="h-[30px] shrink-0 flex items-center pb-[3px]">
            <Tool n="addfav" cls="w-[27px] pl-px" />
            <Tool n="refresh" cls="w-[25px]" />
            <Tool n="filter" cls="w-[25px]" />
            <Tool n="collapse" cls="w-[26px]" />
            <Tool n="info" cls="w-[24px]" />
          </div>
          <div className="h-[455px] shrink-0 flex bg-white border-t border-b border-[#b9b9b9] overflow-hidden">
            <div className="flex-1 min-w-0 overflow-hidden">
              {NAV.map(([lvl, caret, icon, label]) => (
                <div key={label + icon} className={`h-[19px] flex items-center whitespace-nowrap ${lvl ? 'pl-[26px]' : 'pl-[6px]'}`}>
                  <div className="w-[17px] shrink-0 flex justify-start pl-[1px]">{caret ? <Caret open={caret === 2} /> : null}</div>
                  <S n={icon} />
                  <span className="ml-[6px] pt-[2px]">{label}</span>
                </div>
              ))}
            </div>
            <div className="w-[14px] shrink-0 border-l border-r border-[#cfcfcf] bg-[#f4f4f4] flex flex-col">
              <div className="h-[14px] shrink-0 flex items-center justify-center border-b border-[#ddd]"><div className="w-0 h-0 border-x-[4px] border-x-transparent border-b-[4px] border-b-[#555]" /></div>
              <div className="flex-1 bg-white border-b border-[#ccc]" />
              <div className="h-[18px] shrink-0 bg-[#e6e6e6]" />
              <div className="h-[13px] shrink-0 flex items-center justify-center"><div className="w-0 h-0 border-x-[4px] border-x-transparent border-t-[4px] border-t-[#555]" /></div>
            </div>
          </div>
          <div className="h-[7px] shrink-0" />
          <PanelTitle text="Camadas" />
          <div className="h-[29px] shrink-0 flex items-center pb-[3px]">
            <Tool n="brush" cls="w-[27px] pl-px" />
            <Tool n="addgrp" cls="w-[25px]" />
            <Tool n="eye" cls="w-[25px]" />
            <Tool n="filter" cls="w-[25px]" />
            <Tool n="eps" cls="w-[21px]" />
            <Arrow cls="w-[13px]" />
            <Tool n="expand" cls="w-[27px]" />
            <Tool n="collapse" cls="w-[25px]" />
            <Tool n="remove" cls="w-[24px]" />
          </div>
          <div className="flex-1 min-h-0 bg-white border border-l-0 border-[#b9b9b9]">
            {LAYERS.map((l) => (
              <div key={l.label} className={`h-[19px] flex items-center pl-[23px] pr-[5px] ${l.sel ? 'bg-[#308cc6]' : ''}`}>
                <Check on={l.on} />
                <div className="ml-[6px] w-4 h-4 flex items-center"><Symbol sym={l.sym} /></div>
                {l.sel ? (
                  <span className="ml-[7px] pt-[2px] font-bold text-white underline underline-offset-2 decoration-1">{l.label}</span>
                ) : (
                  <span className={`ml-[7px] pt-[2px] font-bold whitespace-nowrap ${l.on ? 'text-black' : 'italic text-[#808080]'}`}>{l.label}</span>
                )}
                <div className="ml-auto flex gap-px">
                  {l.chip && <div className={`w-[17px] h-[17px] flex items-center justify-center rounded-[2px] ${l.sel ? 'bg-[#e6eef5]' : 'bg-[#efefef]'}`}><S n="chip" size={15} /></div>}
                  {l.filter && <div className="w-[17px] h-[17px] flex items-center justify-center rounded-[2px] bg-[#efefef]"><svg width="14" height="14" viewBox="0 0 14 14"><path d="M1 1h12L8.5 7v6l-3-1.5V7z" fill="none" stroke="#777" /></svg></div>}
                </div>
              </div>
            ))}
          </div>
        </div>

        {/* Map canvas */}
        <div className="w-[7px] shrink-0" />
        <div className="flex-1 min-w-0 bg-white border border-[#bdbdbd] flex items-center justify-center">
          <MapDrawing />
        </div>
        <div className="w-[7px] shrink-0" />

        {/* Processing toolbox */}
        <div className="w-[465px] shrink-0 flex flex-col">
          <PanelTitle text="Caixa de Ferramentas de processamento" />
          <div className="h-[30px] shrink-0 flex items-center pl-[1px] pb-[3px]">
            <Tool n="models" cls="w-[26px]" />
            <Tool n="py" cls="w-[25px]" />
            <Tool n="clock" cls="w-[25px]" />
            <Tool n="doc" cls="w-[25px]" dim />
            <Sep cls="w-[7px]" />
            <Tool n="noteEd" cls="w-[24px]" />
            <Sep cls="w-[9px]" />
            <Tool n="wrench" cls="w-[24px]" />
          </div>
          <div className="h-[25px] shrink-0 bg-white border border-[#bbb] rounded-[3px] flex items-center pl-[8px] pr-[6px]">
            <Search size={14} color="#888" strokeWidth={1.5} />
            <span className="ml-[7px] pt-[2px] flex-1">multip</span>
            <svg width="14" height="11" viewBox="0 0 14 11"><path d="M4 0h10v11H4L0 5.5z" fill="#999" /><path d="M6.5 3l4.5 5M11 3 6.5 8" stroke="#fff" strokeWidth="1.3" /></svg>
          </div>
          <div className="flex-1 min-h-0 bg-white border border-[#bbb]">
            {[['clock', 'Usado recentemente'], ['qgis', 'Geometria do vetor'], ['grass', 'GRASS']].map(([n, t]) => (
              <div key={t} className="h-[19px] flex items-center pl-[7px]">
                <div className="w-[16px] shrink-0"><Caret /></div>
                <S n={n} />
                <span className="ml-[6px] pt-[2px]">{t}</span>
              </div>
            ))}
          </div>
        </div>
      </div>

      {/* Status bar */}
      <div className="h-[32px] shrink-0 flex items-center text-[11.7px] bg-[#efefef] whitespace-nowrap">
        <div className="ml-[3px] w-[360px] h-[25px] bg-white border border-[#bbb] rounded-[3px] flex items-center pl-[7px] text-[14.4px] text-[#8a8a8a]">
          <Search size={14} color="#888" strokeWidth={1.5} />
          <span className="ml-[7px] pt-[2px]">Escreva para localizar (Ctrl+K)</span>
        </div>
        <div className="ml-auto w-[66px] shrink-0">Coordenada</div>
        <div className="ml-[3px] w-[110px] h-[23px] bg-white border border-[#bbb] rounded-[3px] flex items-center justify-center">931209,9112866</div>
        <div className="ml-[4px] w-[16px]"><S n="mapmouse" /></div>
        <div className="ml-[13px] w-[34px]">Escala</div>
        <div className="ml-[3px] w-[97px] h-[23px] bg-white border border-[#bbb] rounded-[3px] flex items-center pl-[4px]">
          <span className="flex-1">1:122252</span>
          <div className="w-[20px] h-full border-l border-[#ccc] flex items-center justify-center"><div className="w-0 h-0 border-x-[4px] border-x-transparent border-t-[5px] border-t-[#666]" /></div>
        </div>
        <div className="ml-[10px] w-[16px]"><S n="lock" /></div>
        <div className="ml-[7px] w-[27px]">Lupa</div>
        <Spin cls="ml-[3px] w-[98px]" value="100%" />
        <div className="ml-[9px] w-[45px]">Rotação</div>
        <Spin cls="ml-[9px] w-[94px]" value="0.0 °" />
        <div className="ml-[7px]"><Check on /></div>
        <div className="ml-[4px] w-[60px]">Renderizar</div>
        <div className="ml-[15px] w-[16px]"><S n="globe" /></div>
        <div className="ml-[2px] w-[66px]">EPSG:31984</div>
        <div className="ml-[24px] mr-[7px] w-[16px]"><S n="msg" /></div>
      </div>
    </div>
  );
}
